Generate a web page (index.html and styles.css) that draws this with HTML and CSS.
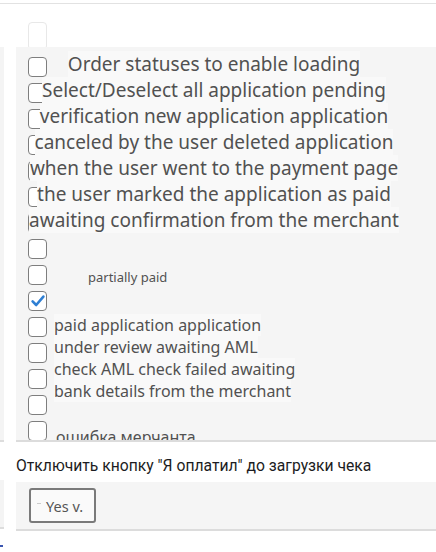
FILE: index.html
```html
<!DOCTYPE html>
<html lang="ru">
<head>
<meta charset="utf-8">
<title>Order statuses</title>
<link rel="stylesheet" href="styles.css">
</head>
<body>
<div class="topline"></div>
<div class="columns">
  <div class="edge">
    <div class="edge-panel edge-panel-a"></div>
    <div class="edge-panel edge-panel-b"></div>
    <div class="edge-mark"></div>
  </div>
  <div class="main">
    <div class="ghost-row"><span class="cb cb-ghost"></span></div>
    <section class="panel panel-list">
      <div class="stack">
        <div class="cb-col">
          <span class="cb"></span>
          <span class="cb"></span>
          <span class="cb"></span>
          <span class="cb"></span>
          <span class="cb"></span>
          <span class="cb"></span>
          <span class="cb"></span>
          <span class="cb"></span>
          <span class="cb"></span>
          <span class="cb cb-checked"><svg viewBox="0 0 18 18" width="18" height="18"><path d="M3.6 9.4 L7.2 13 L14.4 4.6" fill="none" stroke="#2f7fd3" stroke-width="2.6" stroke-linecap="round" stroke-linejoin="round"/></svg></span>
          <span class="cb"></span>
          <span class="cb"></span>
          <span class="cb"></span>
          <span class="cb"></span>
          <span class="cb"></span>
        </div>
        <div class="labels">
          <p class="lead"><span class="hl">Order statuses to enable loading Select/Deselect all application pending verification new application application canceled by the user deleted application when the user went to the payment page the user marked the application as paid awaiting confirmation from the merchant</span></p>
          <p class="small">partially paid</p>
          <p class="list"><span class="hl">paid application application<br>under review awaiting AML<br>check AML check failed awaiting<br>bank details from the merchant</span></p>
          <p class="list list-last">ошибка мерчанта</p>
        </div>
      </div>
    </section>
    <h3 class="heading">Отключить кнопку "Я оплатил" до загрузки чека</h3>
    <section class="panel panel-select">
      <div class="select"><span class="select-tick"></span><span>Yes v.</span></div>
    </section>
  </div>
</div>
</body>
</html>
```
FILE: styles.css
```css
html, body {
  margin: 0;
  padding: 0;
  background: #ffffff;
}
body {
  width: 436px;
  height: 552px;
  overflow: hidden;
  font-family: "Noto Sans", "Open Sans", sans-serif;
  color: #515151;
}
.topline {
  height: 1px;
  margin-top: 3px;
  background: #e2e2e2;
}
.columns {
  display: flex;
}
.edge {
  width: 4px;
  display: flex;
  flex-direction: column;
}
.edge-panel {
  background: #f4f4f4;
  border-bottom: 2px solid #dddddd;
}
.edge-panel-a {
  margin-top: 43px;
  height: 393px;
}
.edge-panel-b {
  margin-top: 38px;
  height: 47px;
}
.edge-mark {
  margin-top: 16px;
  width: 3px;
  height: 2px;
  background: #3a55b0;
}
.main {
  flex: 1;
  margin-left: 12px;
  display: flex;
  flex-direction: column;
}
.ghost-row {
  height: 43px;
  padding-left: 12px;
  box-sizing: border-box;
  padding-top: 18px;
  overflow: hidden;
}
.cb {
  display: block;
  flex: none;
  width: 17px;
  height: 18px;
  border: 1px solid #7e7e7e;
  border-radius: 4px;
  background: #ffffff;
}
.cb-ghost {
  height: 26px;
  border-color: #e8e8e8;
}
.cb-checked svg {
  display: block;
  margin: 0;
}
.panel {
  background: #f5f5f5;
  border-bottom: 2px solid #dcdcdc;
}
.panel-list {
  height: 393px;
  overflow: hidden;
  padding-left: 12px;
}
.stack {
  display: grid;
}
.cb-col,
.labels {
  grid-area: 1 / 1;
}
.cb-col {
  display: flex;
  flex-direction: column;
  gap: 6px;
  padding-top: 10px;
}
.labels {
  padding-top: 4px;
}
.labels p {
  margin: 0;
}
.hl {
  background: #f9f9f9;
}
.lead {
  width: 372px;
  text-align: center;
  font-size: 19px;
  line-height: 26px;
}
.small {
  margin-top: 35px !important;
  padding-left: 60px;
  font-size: 13px;
  line-height: 18px;
}
.list {
  margin-top: 28px !important;
  padding-left: 26px;
  font-size: 16px;
  line-height: 22px;
}
.list-last {
  margin-top: 24px !important;
  padding-left: 28px;
}
.heading {
  margin: 14px 0 6px;
  font-family: Roboto, "Liberation Sans", sans-serif;
  font-weight: 400;
  font-size: 15.7px;
  line-height: 20px;
  color: #1c1c22;
}
.panel-select {
  height: 41px;
  padding: 6px 0 0 13px;
}
.select {
  width: 57px;
  height: 31px;
  border: 2px solid #7a7a7a;
  border-radius: 3px;
  background: #fafafa;
  display: flex;
  align-items: center;
  gap: 5px;
  padding-left: 6px;
  font-size: 14.5px;
  color: #555555;
}
.select-tick {
  width: 4px;
  height: 1px;
  background: #cccccc;
  margin-top: -4px;
}
```
